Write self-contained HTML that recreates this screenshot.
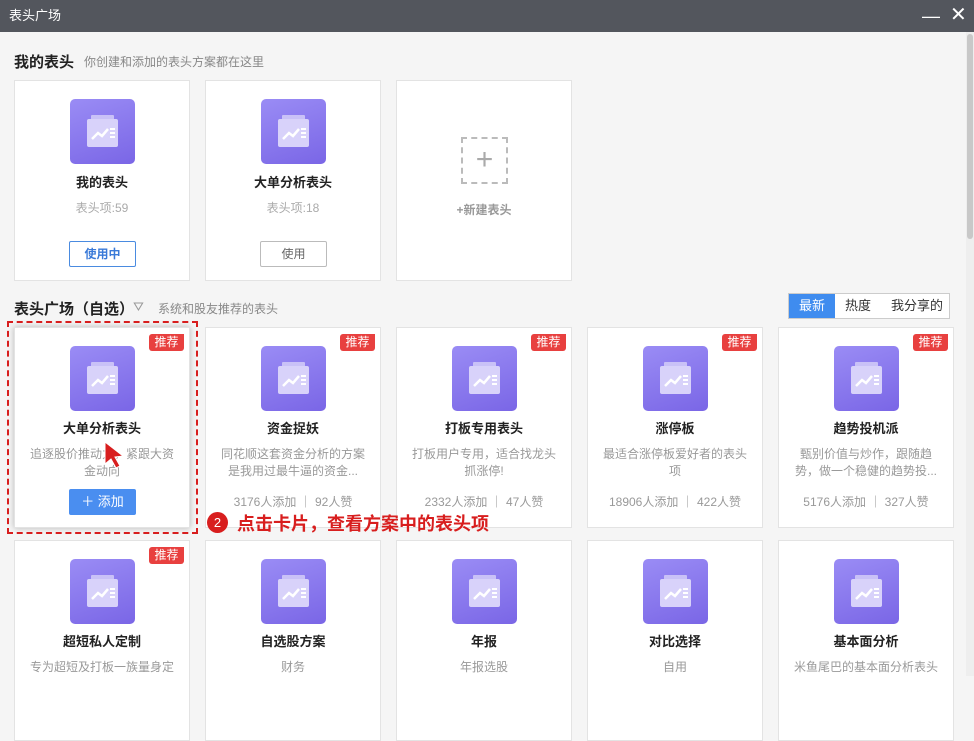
<!DOCTYPE html>
<html><head><meta charset="utf-8"><style>
*{margin:0;padding:0;box-sizing:border-box}
body{width:974px;height:676px;overflow:hidden;background:#f5f5f5;font-family:"Liberation Sans","Noto Sans CJK SC",sans-serif;position:relative;font-size:12px;color:#333}
.bar{position:absolute;left:0;top:0;width:974px;height:32px;background:#53565d;color:#fff;font-size:13px;line-height:32px;padding-left:9px}
.card{position:absolute;width:176px;height:201px;background:#fff;border:1px solid #e3e3e3;text-align:center}
.ic{position:absolute;left:55px;top:18px;width:65px;height:65px;border-radius:5px;background:linear-gradient(160deg,#9a8cf5,#7a66e6)}
.ic svg{position:absolute;left:0;top:0}
.t{position:absolute;left:0;right:0;font-weight:bold;font-size:13px;color:#222}
.s{position:absolute;left:10px;right:10px;color:#999;font-size:12px;line-height:17px}
.btn{position:absolute;left:54px;width:67px;height:26px;border:1px solid #bbb;line-height:24px;border-radius:2px;color:#666}
.tag{position:absolute;right:5px;top:6px;width:35px;height:17px;background:#e8403f;color:#fff;font-size:12px;line-height:17px;border-radius:3px 0 3px 3px}
h2{position:absolute;font-size:15px;font-weight:bold;color:#222}
.sub{position:absolute;font-size:12px;color:#888}
</style></head><body>
<div class="bar">表头广场<span style="position:absolute;left:922px;top:0;font-size:18px">—</span><span style="position:absolute;left:950px;top:-1px;font-size:20px">✕</span></div>
<div style="position:absolute;left:966px;top:32px;width:8px;height:644px;background:#eee"></div>
<div style="position:absolute;left:967px;top:34px;width:6px;height:205px;background:#c8c8c8;border-radius:3px"></div>
<h2 style="left:14px;top:51px">我的表头</h2><div class="sub" style="left:84px;top:53px">你创建和添加的表头方案都在这里</div>
<svg width="0" height="0" style="position:absolute"><defs><g id="i"><rect x="21" y="16" width="23" height="6" rx="1" fill="#c9c1f7"/><rect x="17" y="20" width="31" height="28" rx="2" fill="#d8d2fa"/><path d="M22 40l6-6 4 3 6-7" stroke="#fff" stroke-width="2.5" fill="none"/><rect x="40" y="29" width="5" height="2" fill="#fff"/><rect x="40" y="33" width="5" height="2" fill="#fff"/><rect x="40" y="37" width="5" height="2" fill="#fff"/></g></defs></svg>

<div class="card" style="left:14px;top:80px"><div class="ic"><svg width="65" height="65"><use href="#i"/></svg></div><div class="t" style="top:91px">我的表头</div><div class="s" style="top:119px;color:#aaa">表头项:59</div><div class="btn" style="top:160px;border-color:#4a8be0;color:#3a7ad8;font-weight:bold">使用中</div></div>
<div class="card" style="left:205px;top:80px"><div class="ic"><svg width="65" height="65"><use href="#i"/></svg></div><div class="t" style="top:91px">大单分析表头</div><div class="s" style="top:119px;color:#aaa">表头项:18</div><div class="btn" style="top:160px">使用</div></div>
<div class="card" style="left:396px;top:80px"><div style="position:absolute;left:64px;top:56px;width:47px;height:47px;border:2px dashed #bbb"></div><div style="position:absolute;left:64px;top:56px;width:47px;height:47px;line-height:45px;font-size:30px;color:#aaa;font-weight:200">+</div><div class="t" style="top:120px;color:#999;font-size:12px">+新建表头</div></div>

<h2 style="left:14px;top:298px">表头广场（自选）</h2><span style="position:absolute;left:133px;top:299px;color:#999;font-size:13px">⛛</span><div class="sub" style="left:158px;top:300px">系统和股友推荐的表头</div>
<div style="position:absolute;left:788px;top:293px;width:162px;height:26px;border:1px solid #ccc;background:#fff;font-size:13px;line-height:24px"><span style="position:absolute;left:0;top:0;width:46px;height:24px;background:#3f8cef;color:#fff;text-align:center">最新</span><span style="position:absolute;left:56px">热度</span><span style="position:absolute;left:102px">我分享的</span></div>

<div class="card" style="left:14px;top:327px;box-shadow:0 0 6px rgba(0,0,0,.25)"><div class="tag">推荐</div><div class="ic"><svg width="65" height="65"><use href="#i"/></svg></div><div class="t" style="top:90px">大单分析表头</div><div class="s" style="top:118px">追逐股价推动力，紧跟大资金动向</div><div class="btn" style="top:161px;background:#4a8ef0;border-color:#4a8ef0;color:#fff;font-size:13px">＋ 添加</div></div>
<div class="card" style="left:205px;top:327px"><div class="tag">推荐</div><div class="ic"><svg width="65" height="65"><use href="#i"/></svg></div><div class="t" style="top:90px">资金捉妖</div><div class="s" style="top:118px">同花顺这套资金分析的方案是我用过最牛逼的资金...</div><div class="s" style="top:166px">3176人添加 ｜ 92人赞</div></div>
<div class="card" style="left:396px;top:327px"><div class="tag">推荐</div><div class="ic"><svg width="65" height="65"><use href="#i"/></svg></div><div class="t" style="top:90px">打板专用表头</div><div class="s" style="top:118px">打板用户专用，适合找龙头抓涨停!</div><div class="s" style="top:166px">2332人添加 ｜ 47人赞</div></div>
<div class="card" style="left:587px;top:327px"><div class="tag">推荐</div><div class="ic"><svg width="65" height="65"><use href="#i"/></svg></div><div class="t" style="top:90px">涨停板</div><div class="s" style="top:118px">最适合涨停板爱好者的表头项</div><div class="s" style="top:166px">18906人添加 ｜ 422人赞</div></div>
<div class="card" style="left:778px;top:327px"><div class="tag">推荐</div><div class="ic"><svg width="65" height="65"><use href="#i"/></svg></div><div class="t" style="top:90px">趋势投机派</div><div class="s" style="top:118px">甄别价值与炒作，跟随趋势，做一个稳健的趋势投...</div><div class="s" style="top:166px">5176人添加 ｜ 327人赞</div></div>

<div class="card" style="left:14px;top:540px"><div class="tag">推荐</div><div class="ic"><svg width="65" height="65"><use href="#i"/></svg></div><div class="t" style="top:90px">超短私人定制</div><div class="s" style="top:118px;white-space:nowrap;overflow:hidden">专为超短及打板一族量身定</div></div>
<div class="card" style="left:205px;top:540px"><div class="ic"><svg width="65" height="65"><use href="#i"/></svg></div><div class="t" style="top:90px">自选股方案</div><div class="s" style="top:118px">财务</div></div>
<div class="card" style="left:396px;top:540px"><div class="ic"><svg width="65" height="65"><use href="#i"/></svg></div><div class="t" style="top:90px">年报</div><div class="s" style="top:118px">年报选股</div></div>
<div class="card" style="left:587px;top:540px"><div class="ic"><svg width="65" height="65"><use href="#i"/></svg></div><div class="t" style="top:90px">对比选择</div><div class="s" style="top:118px">自用</div></div>
<div class="card" style="left:778px;top:540px"><div class="ic"><svg width="65" height="65"><use href="#i"/></svg></div><div class="t" style="top:90px">基本面分析</div><div class="s" style="top:118px;white-space:nowrap;overflow:hidden">米鱼尾巴的基本面分析表头</div></div>

<div style="position:absolute;left:7px;top:321px;width:191px;height:213px;border:2px dashed #d81e1e"></div>
<svg style="position:absolute;left:100px;top:440px" width="30" height="32"><path d="M5 2l0 22 6-5 5 9 4-2-5-9 8-1z" fill="#d81e1e" stroke="#fff" stroke-width="1"/></svg>
<div style="position:absolute;left:207px;top:512px;width:21px;height:21px;border-radius:50%;background:#d81e1e;color:#fff;font-size:13px;line-height:21px;text-align:center">2</div>
<div style="position:absolute;left:237px;top:510px;color:#d81e1e;font-size:18px;font-weight:bold">点击卡片，查看方案中的表头项</div>
</body></html>
